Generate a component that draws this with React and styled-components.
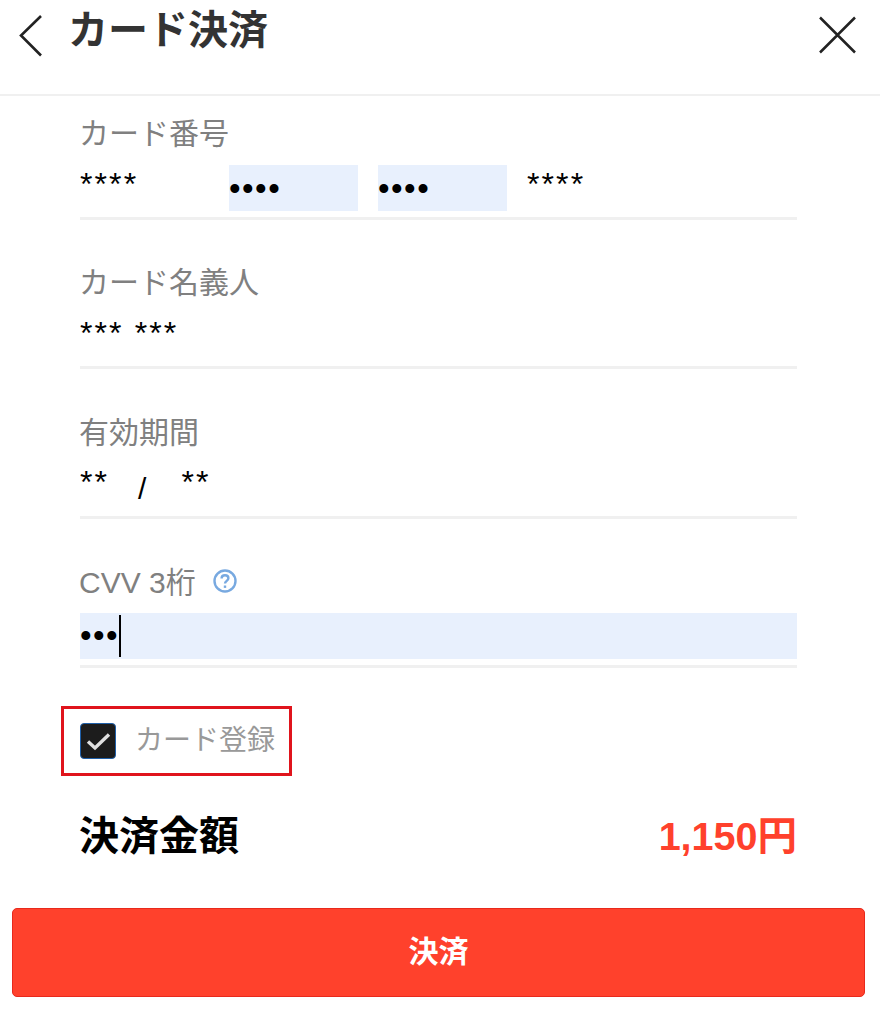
import styled, { createGlobalStyle } from "styled-components";

const GlobalStyle = createGlobalStyle`
  html, body {
    margin: 0;
    background: #fff;
    font-family: "Liberation Sans", "Noto Sans CJK JP", sans-serif;
  }
`;

const Page = styled.div`
  width: 880px;
  height: 1020px;
  overflow: hidden;
  display: flex;
  flex-direction: column;
`;

const Header = styled.header`
  height: 94px;
  flex: none;
  border-bottom: 2px solid #f0f0f0;
  display: flex;
  align-items: flex-start;
  padding: 0 22px 0 18px;
`;

const IconButton = styled.button`
  border: 0;
  background: none;
  padding: 0;
  margin-top: ${(p) => p.$top}px;
  display: block;
  line-height: 0;
`;

const Title = styled.h1`
  flex: 1;
  margin: 7px 0 0 24px;
  font-size: 40px;
  line-height: 46px;
  font-weight: 700;
  color: #333;
`;

const Form = styled.div`
  padding: 16px 83px 0 80px;
  display: flex;
  flex-direction: column;
  gap: 41.3px;
`;

const Field = styled.div`
  display: flex;
  flex-direction: column;
`;

const Label = styled.label`
  box-sizing: border-box;
  display: flex;
  align-items: center;
  gap: 16px;
  height: 38px;
  padding-top: ${(p) => p.$drop || 0}px;
  margin-left: -1px;
  font-size: 30px;
  color: #808080;
`;

const Help = styled.svg`
  width: 26px;
  height: 26px;
  margin-top: 1px;
`;

const InputRow = styled.div`
  display: flex;
  gap: 20px;
  height: 46px;
  margin-top: 15px;
`;

const Value = styled.div`
  box-sizing: border-box;
  width: ${(p) => p.$width || "auto"};
  flex: ${(p) => (p.$grow ? 1 : "none")};
  display: flex;
  align-items: center;
  gap: ${(p) => p.$gap || 0}px;
  padding-bottom: ${(p) => (p.$filled ? 0 : 8)}px;
  background: ${(p) => (p.$filled ? "#e8f0fd" : "transparent")};
  color: #000;
  font-size: 32px;
  letter-spacing: 2.1px;
  white-space: pre;
`;

const Slash = styled.span`
  padding-top: 13px;
  margin-right: 4px;
  font-size: 30px;
`;

const Dots = styled.span`
  font-size: 33px;
  letter-spacing: 1.5px;
  line-height: 1;
`;

const Caret = styled.span`
  width: 1.5px;
  height: 42px;
  background: #000;
`;

const Rule = styled.div`
  height: 3px;
  margin-top: 6px;
  background: #f0f0f0;
`;

const SaveCard = styled.div`
  align-self: flex-start;
  box-sizing: border-box;
  width: 231px;
  height: 70px;
  margin: 38px 0 0 61px;
  border: 3px solid #e0141c;
  padding-left: 16px;
  display: flex;
  align-items: center;
  gap: 19px;
`;

const Check = styled.span`
  width: 36px;
  height: 36px;
  box-sizing: border-box;
  border-radius: 4px;
  background: #1c1c1c;
  border: 1px solid #1f5fa8;
  display: flex;
  align-items: center;
  justify-content: center;
`;

const SaveLabel = styled.span`
  padding-bottom: 6px;
  font-size: 28px;
  color: #999;
`;

const Total = styled.div`
  display: flex;
  justify-content: space-between;
  align-items: center;
  margin: 32px 83px 0 79px;
  height: 50px;
  font-weight: 700;
`;

const TotalLabel = styled.span`
  font-size: 40px;
  color: #000;
`;

const TotalPrice = styled.span`
  font-size: 39.5px;
  color: #ff412c;
`;

const PayButton = styled.button`
  margin: 50px 15px 0 12px;
  padding: 0 0 6px;
  height: 89px;
  flex: none;
  border: 1px solid #e8291c;
  border-radius: 5px;
  background: #ff412c;
  color: #fff;
  font-family: inherit;
  font-size: 30px;
  font-weight: 700;
`;

const App = () => (
  <Page>
    <GlobalStyle />
    <Header>
      <IconButton $top={13}>
        <svg width="26" height="46" viewBox="0 0 26 46" fill="none" stroke="#222" strokeWidth="2.6">
          <path d="M23 3 3 22.5 23 42.5" />
        </svg>
      </IconButton>
      <Title>カード決済</Title>
      <IconButton $top={15}>
        <svg width="40" height="40" viewBox="0 0 40 40" fill="none" stroke="#222" strokeWidth="2.5">
          <path d="M2 2.5 37 37.5M37 2.5 2 37.5" />
        </svg>
      </IconButton>
    </Header>
    <Form>
      <Field>
        <Label>カード番号</Label>
        <InputRow>
          <Value $width="129px">****</Value>
          <Value $width="129px" $filled><Dots>••••</Dots></Value>
          <Value $width="129px" $filled><Dots>••••</Dots></Value>
          <Value $width="129px">****</Value>
        </InputRow>
        <Rule />
      </Field>
      <Field>
        <Label>カード名義人</Label>
        <InputRow>
          <Value>*** ***</Value>
        </InputRow>
        <Rule />
      </Field>
      <Field>
        <Label>有効期間</Label>
        <InputRow>
          <Value $gap={29}>
            <span>**</span>
            <Slash>/</Slash>
            <span>**</span>
          </Value>
        </InputRow>
        <Rule />
      </Field>
      <Field>
        <Label $drop={3}>
          CVV 3桁
          <Help viewBox="0 0 26 26" fill="none" stroke="#78a9e0" strokeWidth="2.4">
            <circle cx="13" cy="13" r="10.5" />
            <path d="M9.6 10.4c0-2 1.5-3.2 3.4-3.2s3.4 1.2 3.4 3c0 2.6-3.4 2.7-3.4 5.4" />
            <path d="M13 17.5v2.4" />
          </Help>
        </Label>
        <InputRow>
          <Value $grow $filled><Dots>•••</Dots><Caret /></Value>
        </InputRow>
        <Rule />
      </Field>
    </Form>
    <SaveCard>
      <Check>
        <svg width="25" height="20" viewBox="0 0 25 20" fill="none" stroke="#e0e0e0" strokeWidth="3.4">
          <path d="M2 10.5 9 17 23 3.5" />
        </svg>
      </Check>
      <SaveLabel>カード登録</SaveLabel>
    </SaveCard>
    <Total>
      <TotalLabel>決済金額</TotalLabel>
      <TotalPrice>1,150円</TotalPrice>
    </Total>
    <PayButton>決済</PayButton>
  </Page>
);

export default App;
